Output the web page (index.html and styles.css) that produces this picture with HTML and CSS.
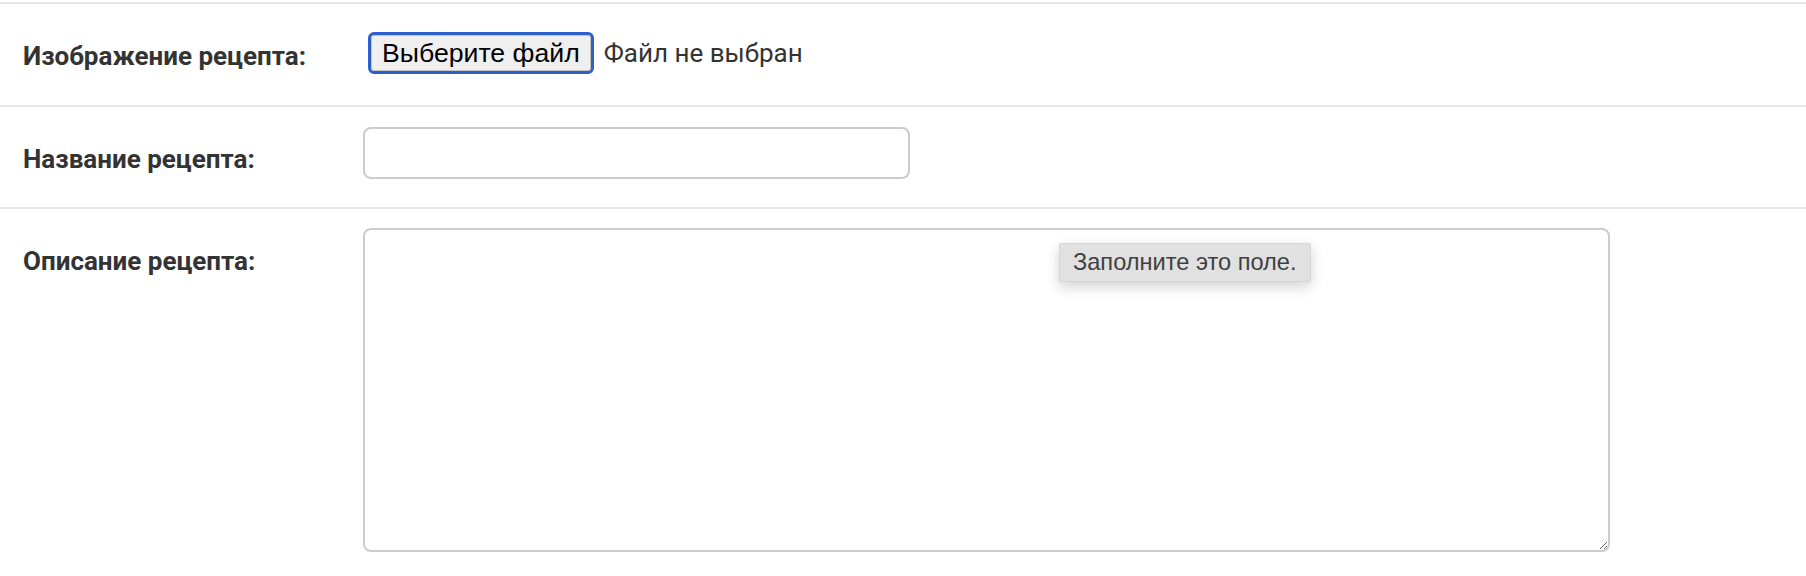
FILE: index.html
```html
<!DOCTYPE html>
<html lang="ru">
<head>
<meta charset="utf-8">
<title>Рецепт</title>
<link rel="stylesheet" href="styles.css">
</head>
<body>
<form class="recipe-form">
  <div class="row">
    <div class="label">Изображение рецепта:</div>
    <div class="field field-file">
      <button type="button" class="file-btn">Выберите файл</button>
      <span class="file-name">Файл не выбран</span>
    </div>
  </div>
  <div class="row">
    <div class="label">Название рецепта:</div>
    <div class="field field-input">
      <input type="text" class="text-input">
    </div>
  </div>
  <div class="row">
    <div class="label">Описание рецепта:</div>
    <div class="field field-area">
      <textarea class="text-area"></textarea>
      <div class="tooltip">Заполните это поле.</div>
    </div>
  </div>
</form>
</body>
</html>
```

FILE: styles.css
```css
html, body {
  margin: 0;
  padding: 0;
  background: #fff;
}

body {
  padding-top: 2px;
  font-family: Roboto, "Liberation Sans", sans-serif;
  color: #333;
}

.recipe-form {
  display: flex;
  flex-direction: column;
}

.row {
  display: flex;
  align-items: flex-start;
  border-top: 2px solid #e6e6e6;
}

.label {
  flex: none;
  box-sizing: border-box;
  width: 363px;
  padding: 37px 0 0 23px;
  font-size: 26px;
  line-height: 30px;
  font-weight: 700;
  color: #333;
}

.field {
  flex: 1;
  position: relative;
}

.field-file {
  display: flex;
  align-items: center;
  padding: 28px 0 31px 5px;
}

.file-btn {
  box-sizing: border-box;
  height: 42px;
  margin: 0 10px 0 0;
  padding: 0 11px;
  border: 3px solid #2b5fc9;
  border-radius: 6px;
  background: #efefef;
  box-shadow: inset 0 0 0 1px #c4c4c4;
  font-family: "Liberation Sans", Arial, sans-serif;
  font-size: 26.67px;
  line-height: 30px;
  color: #000;
}

.file-name {
  font-family: Roboto, "Liberation Sans", sans-serif;
  font-size: 26px;
  line-height: 30px;
  color: #333;
}

.field-input {
  padding: 20px 0 28px;
}

.text-input {
  display: block;
  box-sizing: border-box;
  width: 547px;
  height: 52px;
  margin: 0;
  padding: 0 12px;
  border: 2px solid #cccccc;
  border-radius: 8px;
  background: #fff;
  font-family: Roboto, sans-serif;
  font-size: 26px;
  outline: none;
}

.field-area {
  padding: 19px 0 30px;
}

.text-area {
  display: block;
  box-sizing: border-box;
  width: 1247px;
  height: 324px;
  margin: 0;
  padding: 8px 12px;
  border: 2px solid #cccccc;
  border-radius: 8px;
  background: #fff;
  font-family: Roboto, sans-serif;
  font-size: 26px;
  outline: none;
  resize: both;
}

.tooltip {
  position: absolute;
  left: 696px;
  top: 34px;
  box-sizing: border-box;
  height: 39px;
  padding: 0 13px;
  background: #e1e1e1;
  border: 1px solid #d6d6d6;
  border-radius: 2px;
  box-shadow: 0 5px 14px rgba(0, 0, 0, 0.18);
  font-family: "Liberation Sans", Arial, sans-serif;
  font-size: 23.6px;
  line-height: 37px;
  color: #404040;
  white-space: nowrap;
}
```
